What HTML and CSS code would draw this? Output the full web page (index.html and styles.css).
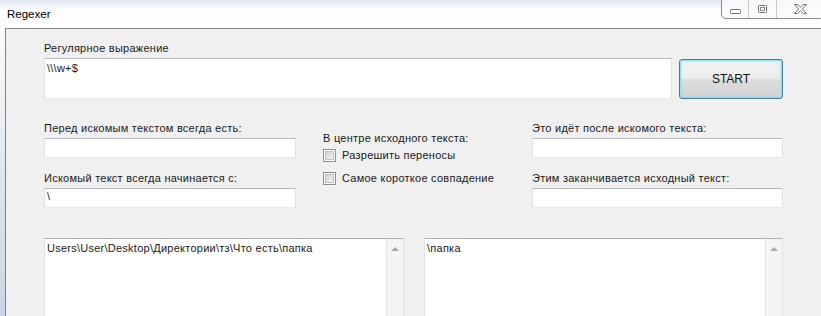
FILE: index.html
```html
<!DOCTYPE html>
<html lang="ru">
<head>
    <meta charset="UTF-8">
    <meta name="viewport" content="width=device-width, initial-scale=1.0">
    <title>Regexer</title>
    <link rel="stylesheet" href="styles.css">
</head>
<body>
    <div class="window">
        <!-- Title bar with caption buttons -->
        <div class="titlebar">
            <span class="title">Regexer</span>
            <div class="caption-buttons">
                <span class="cap-btn cap-min">
                    <svg width="11" height="5" viewBox="0 0 11 5"><rect x="0.5" y="0.5" width="10" height="4" rx="1" fill="#fff" stroke="#6f6f6f"/></svg>
                </span>
                <span class="cap-btn cap-max">
                    <svg width="9" height="8" viewBox="0 0 9 8"><rect x="0.5" y="0.5" width="8" height="7" rx="1" fill="#fff" stroke="#6f6f6f"/><rect x="2.5" y="2.5" width="4" height="3" fill="none" stroke="#8a8a8a"/></svg>
                </span>
                <span class="cap-btn cap-close">
                    <svg width="13" height="10" viewBox="0 0 13 10"><path d="M0.5 0.5 H3.5 L6.5 3.2 L9.5 0.5 H12.5 L8.3 5 L12.5 9.5 H9.5 L6.5 6.8 L3.5 9.5 H0.5 L4.7 5 Z" fill="#fff" stroke="#6f6f6f" stroke-linejoin="round"/></svg>
                </span>
            </div>
        </div>

        <div class="client">
            <div class="form">
                <div class="row-top">
                    <div class="field regex-field">
                        <label for="regex">Регулярное выражение</label>
                        <textarea id="regex" class="textbox textbox-tall">\\\w+$</textarea>
                    </div>
                    <button class="start-btn">START</button>
                </div>

                <div class="row-middle">
                    <div class="column">
                        <div class="field">
                            <label for="before">Перед искомым текстом всегда есть:</label>
                            <input type="text" id="before" class="textbox">
                        </div>
                        <div class="field">
                            <label for="starts">Искомый текст всегда начинается с:</label>
                            <input type="text" id="starts" class="textbox" value="\">
                        </div>
                    </div>

                    <div class="column column-center">
                        <div class="center-title">В центре исходного текста:</div>
                        <label class="check-row"><span class="checkbox"></span>Разрешить переносы</label>
                        <label class="check-row"><span class="checkbox"></span>Самое короткое совпадение</label>
                    </div>

                    <div class="column">
                        <div class="field">
                            <label for="after">Это идёт после искомого текста:</label>
                            <input type="text" id="after" class="textbox">
                        </div>
                        <div class="field">
                            <label for="ends">Этим заканчивается исходный текст:</label>
                            <input type="text" id="ends" class="textbox">
                        </div>
                    </div>
                </div>

                <div class="row-bottom">
                    <div class="text-area">
                        <div class="text-area-content">Users\User\Desktop\Директории\тз\Что есть\папка</div>
                        <div class="scrollbar"><span class="scroll-arrow"></span></div>
                    </div>
                    <div class="text-area">
                        <div class="text-area-content">\папка</div>
                        <div class="scrollbar"><span class="scroll-arrow"></span></div>
                    </div>
                </div>
            </div>
        </div>
    </div>
</body>
</html>
```

FILE: styles.css
```css
/* Page and window frame */
body {
    margin: 0;
    overflow: hidden;
    font-family: 'Liberation Sans', Arial, sans-serif;
    font-size: 11px;
    line-height: 13px;
    letter-spacing: 0.25px;
    color: #1a1a1a;
    background: linear-gradient(to bottom, #e4ebf2 0, #f7f9fb 9px, #fbfcfd 28px, #d9e4ee 60%, #c7d6e4 100%);
}

.window {
    height: 316px;
    display: flex;
    flex-direction: column;
}

/* Title bar */
.titlebar {
    flex: none;
    height: 28px;
    display: flex;
    align-items: flex-start;
    background: linear-gradient(to bottom, rgba(220, 230, 240, 0.7) 0, rgba(255, 255, 255, 0.6) 10px, rgba(255, 255, 255, 0.9) 28px);
}

.title {
    margin: 8px 0 0 7px;
    font-size: 11.5px;
    letter-spacing: 0;
    color: #000;
}

.caption-buttons {
    margin-left: auto;
    margin-right: -3px;
    margin-top: -1px;
    display: flex;
    height: 19px;
    border: 1px solid #8d8d8d;
    border-top: none;
    border-radius: 0 0 5px 5px;
    background: linear-gradient(to bottom, #f4f6f8, #fdfdfd);
    box-shadow: inset 0 -1px 0 #fff;
}

.cap-btn {
    display: flex;
    align-items: center;
    justify-content: center;
    border-left: 1px solid #c8c8c8;
}

.cap-min {
    width: 26px;
    border-left: none;
    padding-top: 5px;
}

.cap-max {
    width: 27px;
}

.cap-close {
    width: 46px;
}

/* Client area */
.client {
    flex: 1;
    min-height: 0;
    margin-left: 5px;
    border-left: 1px solid #7f8388;
    border-top: 1px solid #8a8a8a;
    background-color: #f0f0f0;
    padding: 13px 0 0 38px;
}

.form {
    width: 739px;
}

.field label {
    display: block;
    margin-bottom: 3px;
}

.textbox {
    display: block;
    box-sizing: border-box;
    width: 100%;
    height: 20px;
    margin: 0;
    padding: 0 2px 4px;
    font-family: inherit;
    font-size: 11px;
    line-height: 13px;
    letter-spacing: 0.25px;
    color: #1a1a1a;
    background-color: #fff;
    border: 1px solid #dfe2e7;
    border-top-color: #b4b7bd;
    border-bottom-color: #e6e9ee;
    outline: none;
}

.textbox-tall {
    height: 41px;
    padding: 3px 2px 0;
    resize: none;
    overflow: hidden;
}

/* Top row: regex + start button */
.row-top {
    display: flex;
    gap: 7px;
}

.regex-field {
    width: 628px;
}

.start-btn {
    width: 104px;
    height: 40px;
    margin-top: 17px;
    font-family: inherit;
    font-size: 12px;
    letter-spacing: 0;
    color: #111;
    border: 1px solid #3d7fa6;
    border-radius: 3px;
    background: linear-gradient(to bottom, #f3f3f3 0, #ececec 48%, #dedede 52%, #d1d1d1 100%);
    box-shadow: inset 0 0 0 1px #92dcf3, inset 0 0 2px 2px rgba(146, 220, 243, 0.45);
    padding: 0;
}

/* Middle row: three columns */
.row-middle {
    display: grid;
    grid-template-columns: 252px 1fr 251px;
    margin-top: 23px;
}

.column .field + .field {
    margin-top: 14px;
}

.column-center {
    padding: 10px 0 0 27px;
}

.center-title {
    margin-bottom: 4px;
}

.check-row {
    display: flex;
    align-items: flex-start;
    gap: 6px;
    margin-bottom: 10px;
}

.checkbox {
    box-sizing: border-box;
    width: 13px;
    height: 13px;
    border: 1px solid #8e8f8f;
    background-color: #fff;
    padding: 1px;
    flex-shrink: 0;
}

.checkbox::before {
    content: "";
    display: block;
    width: 9px;
    height: 9px;
    box-sizing: border-box;
    border: 1px solid #bcbfc3;
    background: linear-gradient(135deg, #cfd2d6, #f3f3f3);
}

/* Bottom row: output text areas */
.row-bottom {
    display: grid;
    grid-template-columns: 360px 359px;
    gap: 20px;
    margin-top: 30px;
}

.text-area {
    display: flex;
    height: 100px;
    background-color: #fff;
    border: 1px solid #dfe2e7;
    border-top-color: #acafb4;
}

.text-area-content {
    flex: 1;
    padding: 3px 2px;
    white-space: nowrap;
}

.scrollbar {
    width: 16px;
    background-color: #f5f5f5;
    border-left: 1px solid #e4e4e4;
    display: flex;
    justify-content: center;
}

.scroll-arrow {
    margin-top: 8px;
    width: 0;
    height: 0;
    border-left: 4px solid transparent;
    border-right: 4px solid transparent;
    border-bottom: 4px solid #a7a7a7;
}
```
